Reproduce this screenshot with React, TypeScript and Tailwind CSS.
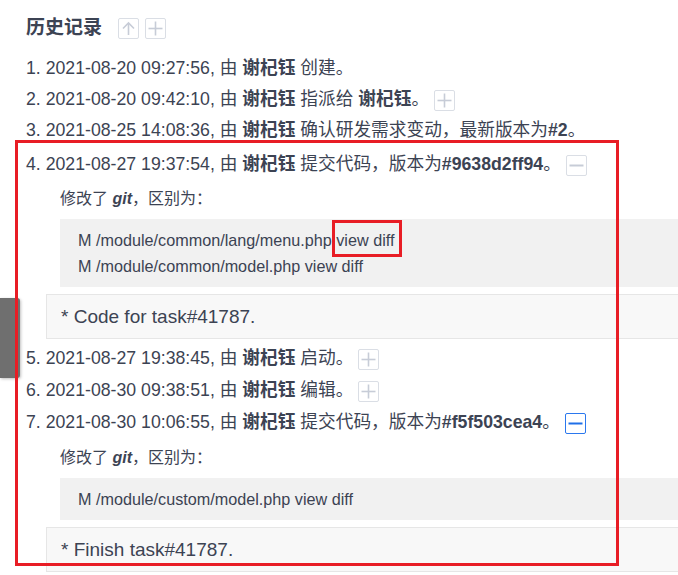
import React from 'react';

type IconKind = 'plus' | 'minus' | 'up';

function ToggleBtn({ kind, active = false, className = '' }: { kind: IconKind; active?: boolean; className?: string }) {
  const stroke = active ? '#1f6fe8' : '#c7ccd7';
  return (
    <span
      className={`inline-flex h-[21px] w-[21px] items-center justify-center rounded-[2px] border align-middle ${
        active ? 'border-[#2b78ee]' : 'border-[#dadee5]'
      } ${className}`}
    >
      <svg width="15" height="15" viewBox="0 0 15 15" fill="none">
        {kind === 'plus' && (
          <>
            <line x1="0.5" y1="7.5" x2="14.5" y2="7.5" stroke={stroke} strokeWidth="1.6" />
            <line x1="7.5" y1="0.5" x2="7.5" y2="14.5" stroke={stroke} strokeWidth="1.6" />
          </>
        )}
        {kind === 'minus' && <line x1="0.5" y1="7.5" x2="14.5" y2="7.5" stroke={stroke} strokeWidth="2" />}
        {kind === 'up' && (
          <>
            <line x1="7.5" y1="2" x2="7.5" y2="14" stroke={stroke} strokeWidth="1.6" />
            <polyline points="2,7.5 7.5,2 13,7.5" stroke={stroke} strokeWidth="1.6" fill="none" />
          </>
        )}
      </svg>
    </span>
  );
}

function Name() {
  return <strong className="font-bold">谢杞钰</strong>;
}

function Changes({ files, comment, top }: { files: string[]; comment: string; top: string }) {
  return (
    <div>
      <div className={`pl-[34px] text-[16px] leading-[24px] ${top}`}>
        修改了 <em className="font-bold italic">git</em>，区别为：
      </div>
      <div className="ml-[34px] mt-[8px] bg-[#f1f1f1] pl-[18px] pt-[8px] pb-[8px] text-[16.2px] leading-[26px]">
        {files.map((f) => (
          <div key={f}>
            M {f} <span>view diff</span>
          </div>
        ))}
      </div>
      <div className="ml-[20px] mt-[7px] border border-[#e6e6e6] bg-[#f8f8f8] pl-[14px] py-[8px] text-[19px] leading-[27px]">
        {comment}
      </div>
    </div>
  );
}

export default function App() {
  return (
    <div
      className="relative h-[575px] w-[678px] overflow-hidden bg-white text-[#3c4353]"
      style={{ fontFamily: '"Liberation Sans", "Noto Sans CJK SC", sans-serif' }}
    >
      {/* side handle */}
      <div className="absolute left-0 top-[298px] h-[80px] w-[20px] rounded-r-[3px] bg-[#6f6f6f] shadow-[1px_1px_3px_rgba(0,0,0,0.25)]" />

      <div className="w-[740px] pl-[26px] pt-[17px]">
        <div className="flex h-[22px] items-center">
          <h2 className="text-[19px] font-bold">历史记录</h2>
          <ToggleBtn kind="up" className="ml-[16px]" />
          <ToggleBtn kind="plus" className="ml-[6px]" />
        </div>

        <ol className="mt-[14px] whitespace-nowrap text-[17.7px] leading-[31px]">
          <li>
            1. 2021-08-20 09:27:56, 由 <Name /> 创建。
          </li>
          <li>
            2. 2021-08-20 09:42:10, 由 <Name /> 指派给 <Name />。<ToggleBtn kind="plus" className="ml-[5px]" />
          </li>
          <li>
            3. 2021-08-25 14:08:36, 由 <Name /> 确认研发需求变动，最新版本为<strong className="font-bold">#2</strong>。
          </li>
          <li className="mt-[3px]">
            <div>
              4. 2021-08-27 19:37:54, 由 <Name /> 提交代码，版本为<strong className="font-bold">#9638d2ff94</strong>。
              <ToggleBtn kind="minus" className="ml-[5px]" />
            </div>
            <Changes
              top="mt-[7px]"
              files={['/module/common/lang/menu.php', '/module/common/model.php']}
              comment="* Code for task#41787."
            />
          </li>
          <li className="mt-[4px]">
            5. 2021-08-27 19:38:45, 由 <Name /> 启动。<ToggleBtn kind="plus" className="ml-[5px]" />
          </li>
          <li className="mt-[1px]">
            6. 2021-08-30 09:38:51, 由 <Name /> 编辑。<ToggleBtn kind="plus" className="ml-[5px]" />
          </li>
          <li className="mt-[1px]">
            <div>
              7. 2021-08-30 10:06:55, 由 <Name /> 提交代码，版本为<strong className="font-bold">#f5f503cea4</strong>。
              <ToggleBtn kind="minus" active className="ml-[5px]" />
            </div>
            <Changes top="mt-[8px]" files={['/module/custom/model.php']} comment="* Finish task#41787." />
          </li>
        </ol>
      </div>

      {/* annotation boxes */}
      <div className="pointer-events-none absolute left-[15px] top-[140px] h-[426px] w-[604px] border-[3px] border-[#e81d25]" />
      <div className="pointer-events-none absolute left-[332px] top-[220px] h-[37px] w-[70px] border-[3px] border-[#e81d25]" />
    </div>
  );
}
